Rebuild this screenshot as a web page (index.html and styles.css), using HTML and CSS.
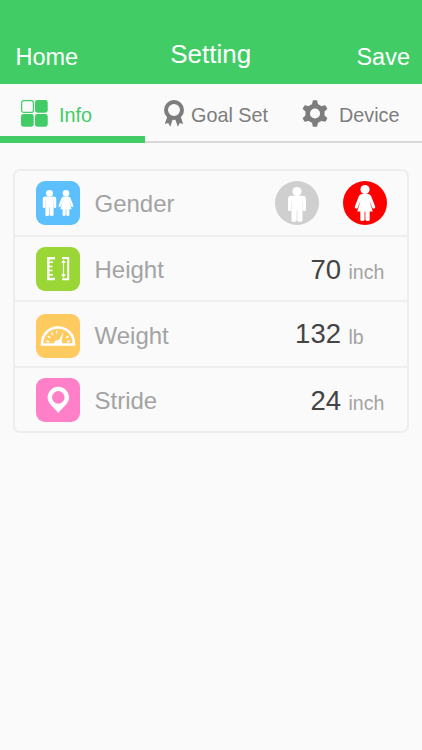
FILE: index.html
```html
<!DOCTYPE html>
<html lang="en">
<head>
<meta charset="utf-8">
<title>Setting</title>
<link rel="stylesheet" href="styles.css">
</head>
<body>
<svg class="defs" width="0" height="0">
  <symbol id="man" viewBox="0 0 20 36" preserveAspectRatio="none">
    <circle cx="10" cy="4.6" r="4.6"/>
    <path d="M4.500 9H15.500Q19 9 19 12.500V23.500Q19 25 17.400 25T15.800 23.500V15H15.500V34.500Q15.500 36 13 36T10.300 34.500V24H9.700V34.500Q9.700 36 7 36T4.500 34.500V15H4.200V23.500Q4.200 25 2.600 25T1 23.500V12.500Q1 9 4.500 9Z"/>
  </symbol>
  <symbol id="woman" viewBox="0 0 22 36">
    <circle cx="11" cy="4.600" r="4.600"/>
    <path d="M8 9H14Q16.500 9 17.300 11.500L21.200 21.500Q21.600 23.200 20.200 23.600T18.200 22.500L15.300 15.500L18.800 26.500H15.700V34.700Q15.700 36 13.700 36T11.400 34.700V26.500H10.600V34.700Q10.600 36 8.300 36T6.300 34.700V26.500H3.200L6.700 15.500L3.800 22.500Q3.200 24 1.800 23.600T.8 21.500L4.700 11.500Q5.500 9 8 9Z"/>
  </symbol>
</svg>
<header class="header">
  <a class="nav">Home</a>
  <h1 class="title">Setting</h1>
  <a class="nav nav-end">Save</a>
</header>
<nav class="tabs">
  <div class="tab tab-info active">
    <svg width="28" height="28" viewBox="0 0 28 28"><rect x="1.600" y="1.600" width="11.800" height="11.800" rx="2.200" fill="none" stroke="currentColor" stroke-width="1.200"/><g fill="currentColor"><rect x="15" y="1" width="12.700" height="12.700" rx="2.400"/><rect x="1" y="15" width="12.700" height="12.700" rx="2.400"/><rect x="15" y="15" width="12.700" height="12.700" rx="2.400"/></g></svg>
    <span>Info</span>
  </div>
  <div class="tab tab-goal">
    <svg width="22" height="28" viewBox="0 0 22 28"><circle cx="11" cy="11" r="8" fill="none" stroke="currentColor" stroke-width="4"/><path d="M4.500 17L1.800 25l3.400-.9L7.200 27.700L10 19.500ZM17.500 17L20.200 25l-3.400-.9L14.800 27.700L12 19.500Z" fill="currentColor"/></svg>
    <span>Goal Set</span>
  </div>
  <div class="tab tab-device">
    <svg width="26" height="28" viewBox="0 0 26 28"><path fill="currentColor" stroke="currentColor" stroke-width="1.500" stroke-linejoin="round" fill-rule="evenodd" d="M11.500 2H14.500L15.300 5.600L19.300 8L23 7L24.500 9.600L21.800 12.200V16.800L24.500 19.400L23 22L19.300 21L15.300 23.400L14.500 27H11.500L10.700 23.400L6.700 21L3 22L1.500 19.400L4.200 16.800V12.200L1.500 9.600L3 7L6.700 8L10.700 5.600ZM13 8.700a5.800 5.800 0 1 0 0 11.600a5.800 5.800 0 1 0 0-11.600Z"/></svg>
    <span>Device</span>
  </div>
</nav>
<main class="card">
  <section class="row row-gender">
    <div class="tile blue"><svg width="15" height="26"><use href="#man"/></svg><svg width="16" height="26"><use href="#woman"/></svg></div>
    <span class="label">Gender</span>
    <div class="choices">
      <div class="choice"><svg width="20" height="35"><use href="#man"/></svg></div>
      <div class="choice selected"><svg width="22" height="36"><use href="#woman"/></svg></div>
    </div>
  </section>
  <section class="row row-height">
    <div class="tile green"><svg width="44" height="44" viewBox="0 0 44 44" fill="none" stroke="#fff"><path d="M19 11.200H12.300V32H19" stroke-width="2.400"/><path d="M12 15.200h5M12 19.400h4.500M12 23.600h4.500M12 27.800h5" stroke-width="1.500"/><path d="M26 11H32.200V32.200H26" stroke-width="2"/><path d="M27.500 14V29M25.800 15.800L27.500 13.500L29.200 15.800M25.800 27.400L27.500 29.700L29.200 27.400" stroke-width="1.200"/></svg></div>
    <span class="label">Height</span>
    <span class="value">70</span><span class="unit">inch</span>
  </section>
  <section class="row row-weight">
    <div class="tile orange"><svg width="44" height="44" viewBox="0 0 44 44" fill="none" stroke="#fff"><path d="M6 30.500C6 7.800 38 7.800 38 30.500Z" stroke-width="2.600"/><path d="M10.200 27l3 .8M11.800 22.200l2.700 1.600M15.400 18.700l1.700 2.500M20.500 16.600l.4 2.800M32.600 22.200l-2.600 1.600M34 27l-3 .8" stroke-width="1.400"/><path d="M18 30a4.200 4.200 0 0 1 5-4.100L27.500 17.500L25.500 27Q26.300 28.300 26.400 30Z" fill="#fff" stroke="none"/></svg></div>
    <span class="label">Weight</span>
    <span class="value">132</span><span class="unit">lb</span>
  </section>
  <section class="row row-stride">
    <div class="tile pink"><svg width="44" height="44" viewBox="0 0 44 44"><path fill="#fff" fill-rule="evenodd" d="M22.300 8.800A10.700 10.700 0 0 1 33 19.500C33 25.500 27 29 22.300 35C17.600 29 11.600 25.500 11.600 19.500A10.700 10.700 0 0 1 22.300 8.800ZM22.300 13.100a6.300 6.300 0 1 0 0 12.600a6.300 6.300 0 1 0 0-12.600Z"/></svg></div>
    <span class="label">Stride</span>
    <span class="value">24</span><span class="unit">inch</span>
  </section>
</main>
</body>
</html>
```

FILE: styles.css
```css
* { box-sizing: border-box; }
body {
  margin: 0;
  min-height: 750px;
  background: #fafafa;
  font-family: "Liberation Sans", Arial, sans-serif;
}
svg { display: block; flex: none; }
.defs { display: none; }
.header {
  display: grid;
  grid-template-columns: 1fr auto 1fr;
  height: 84px;
  padding: 30px 12px 0 15.5px;
  background: #42cc66;
  color: #fff;
}
.nav { font-size: 23.5px; line-height: 54px; }
.nav-end { text-align: right; }
.title { margin: 0 4px 0 0; font-size: 26px; font-weight: 400; line-height: 49px; }
.tabs {
  display: flex;
  height: 59px;
  border-bottom: 2px solid #d8d8d8;
  color: #7d7d7d;
  font-size: 19.8px;
  line-height: 62px;
}
.tab { display: flex; height: 59px; }
.tab svg { margin-top: 15px; }
.tab-info { width: 145px; padding-left: 20px; gap: 11px; }
.tab-goal { width: 157px; padding-left: 18px; gap: 6px; }
.tab-device { gap: 11px; }
.active { color: #42cc66; border-bottom: 7px solid #42cc66; }
.card {
  width: 396px;
  height: 264px;
  margin: 26px 0 0 13px;
  border: 2px solid #eee;
  border-radius: 7px;
}
.row {
  display: flex;
  align-items: flex-start;
  height: 66px;
  padding: 10px 0 0 21px;
  border-bottom: 2px solid #eee;
}
.row-height { height: 65px; }
.row-stride { border-bottom: 0; height: 64px; }
.tile {
  display: flex;
  flex: none;
  align-items: center;
  justify-content: center;
  gap: 1px;
  width: 44px;
  height: 44px;
  border-radius: 9px;
  fill: #fff;
}
.blue { background: #5bc0fd; }
.green { background: #9ad736; }
.orange { background: #ffca60; margin-top: 2px; }
.pink { background: #ff80c8; }
.label {
  width: 130px;
  margin-left: 14.5px;
  color: #a3a3a3;
  font-size: 24px;
  line-height: 46px;
}
.row-weight .label { line-height: 48px; }
.choices { display: flex; gap: 24px; margin-left: 50.5px; }
.choice {
  display: flex;
  align-items: center;
  justify-content: center;
  width: 44px;
  height: 44px;
  border-radius: 50%;
  background: #cfcfcf;
  fill: #fff;
}
.choice svg { margin-top: 2px; }
.selected { background: #f00; }
.selected svg { margin-top: -1px; }
.value {
  width: 116.5px;
  color: #444;
  font-size: 27.5px;
  line-height: 46px;
  text-align: right;
}
.row-weight .value { line-height: 44px; }
.unit { margin-left: 7.5px; color: #a3a3a3; font-size: 19.5px; line-height: 50px; }
```
